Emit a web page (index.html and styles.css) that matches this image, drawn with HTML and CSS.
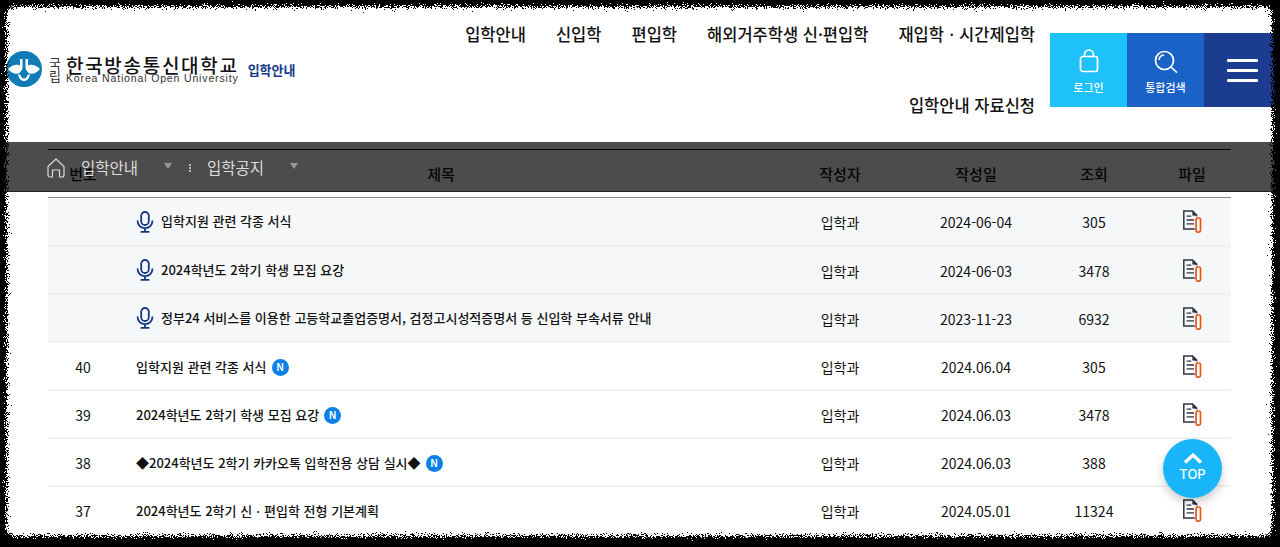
FILE: index.html
```html
<!DOCTYPE html>
<html lang="ko">
<head>
    <meta charset="UTF-8">
    <title>입학공지 - 한국방송통신대학교 입학안내</title>
    <link rel="stylesheet" href="styles.css">
</head>
<body>
    <svg width="0" height="0" class="defs">
        <defs>
            <symbol id="mic" viewBox="0 0 18 22">
                <rect x="5.2" y="1" width="7.6" height="13" rx="3.8" fill="none" stroke="currentColor" stroke-width="1.8"/>
                <path d="M1.5 9.500c0 4.600 3.300 7.600 7.500 7.600s7.500-3 7.500-7.600M9 17.100v3.600M4.600 20.900h8.800" fill="none" stroke="currentColor" stroke-width="1.8"/>
            </symbol>
            <symbol id="doc" viewBox="0 0 20 24">
                <path d="M14.600 6.500V5L10.600 1H1.800v18h11" fill="none" stroke="#2f3442" stroke-width="1.500"/>
                <path d="M10.800 1.600v3.600h3.400z" fill="#2f3442" stroke="#2f3442" stroke-width=".8"/>
                <path d="M4.600 6.200h4.600M4.600 10h7.400M4.600 13.800h7.400" fill="none" stroke="#2f3442" stroke-width="1.300"/>
                <rect x="14.100" y="8" width="4.400" height="14.200" rx="1.600" fill="#fff" stroke="#ee5316" stroke-width="1.700"/>
            </symbol>
        </defs>
    </svg>

    <header class="site-header">
        <a class="logo" href="#">
            <svg class="logo-mark" viewBox="0 0 36 36" width="36" height="36">
                <circle cx="18" cy="18" r="18" fill="#0f7cb8"/>
                <path d="M2 18c3-3 7-5 11-4l1 1V8h2.500v10l-3 4c-4 2-8 0-11.500-4zM34 18c-3-3-7-5-11-4l-1 1V8h-2.500v10l3 4c4 2 8 0 11.500-4z" fill="#fff"/>
                <path d="M12 23c1 5 3 7 6 7s5-2 6-7l-2.500 1c-.5 2-2 3.500-3.500 3.500s-3-1.500-3.500-3.500z" fill="#fff"/>
            </svg>
            <span class="logo-kuk">국<br>립</span>
            <span class="logo-name">
                <strong>한국방송통신대학교</strong>
                <small>Korea National Open University</small>
            </span>
            <span class="logo-sub">입학안내</span>
        </a>
        <nav class="gnb">
            <a href="#">입학안내</a>
            <a href="#">신입학</a>
            <a href="#">편입학</a>
            <a href="#">해외거주학생 신·편입학</a>
            <a href="#">재입학ㆍ시간제입학</a>
            <a href="#">입학안내 자료신청</a>
        </nav>
        <div class="util">
            <a class="util-btn login" href="#">
                <svg viewBox="0 0 20 24" width="20" height="24" fill="none" stroke="#fff" stroke-width="1.700">
                    <rect x="1.500" y="7.500" width="17" height="15" rx="2.500"/>
                    <path d="M5.500 7.500V5.500a4.500 4.500 0 0 1 9 0v2"/>
                </svg>
                로그인
            </a>
            <a class="util-btn search" href="#">
                <svg viewBox="0 0 24 24" width="24" height="24" fill="none" stroke="#fff" stroke-width="1.700">
                    <circle cx="10.500" cy="10.500" r="9"/>
                    <path d="M17 17l6 5.600M5 10a5.500 5.500 0 0 1 5-5"/>
                </svg>
                통합검색
            </a>
            <a class="util-btn menu" href="#"><i></i><i></i><i></i></a>
        </div>
    </header>

    <div class="breadcrumb">
        <svg class="home" viewBox="0 0 18 20" width="18" height="20" fill="none" stroke="#ddd" stroke-width="1.200">
            <path d="M1 8.500 9 1l8 7.500V17a2 2 0 0 1-2 2h-2.500v-7h-7v7H3a2 2 0 0 1-2-2z"/>
        </svg>
        <span class="crumb">입학안내</span>
        <span class="caret"></span>
        <span class="dots"></span>
        <span class="crumb second">입학공지</span>
        <span class="caret last"></span>
    </div>

    <main class="board">
        <table>
            <colgroup>
                <col class="c-num"><col class="c-title"><col class="c-writer"><col class="c-date"><col class="c-views"><col class="c-file">
            </colgroup>
            <thead>
                <tr><th>번호</th><th class="head-title">제목</th><th>작성자</th><th>작성일</th><th>조회</th><th class="file">파일</th></tr>
            </thead>
            <tbody>
                <tr class="notice">
                    <td></td>
                    <td class="title"><svg class="mic"><use href="#mic"/></svg>입학지원 관련 각종 서식</td>
                    <td>입학과</td><td>2024-06-04</td><td>305</td>
                    <td class="file"><svg class="doc"><use href="#doc"/></svg></td>
                </tr>
                <tr class="notice">
                    <td></td>
                    <td class="title"><svg class="mic"><use href="#mic"/></svg>2024학년도 2학기 학생 모집 요강</td>
                    <td>입학과</td><td>2024-06-03</td><td>3478</td>
                    <td class="file"><svg class="doc"><use href="#doc"/></svg></td>
                </tr>
                <tr class="notice">
                    <td></td>
                    <td class="title"><svg class="mic"><use href="#mic"/></svg>정부24 서비스를 이용한 고등학교졸업증명서, 검정고시성적증명서 등 신입학 부속서류 안내</td>
                    <td>입학과</td><td>2023-11-23</td><td>6932</td>
                    <td class="file"><svg class="doc"><use href="#doc"/></svg></td>
                </tr>
                <tr>
                    <td>40</td>
                    <td class="title">입학지원 관련 각종 서식<span class="new">N</span></td>
                    <td>입학과</td><td>2024.06.04</td><td>305</td>
                    <td class="file"><svg class="doc"><use href="#doc"/></svg></td>
                </tr>
                <tr>
                    <td>39</td>
                    <td class="title">2024학년도 2학기 학생 모집 요강<span class="new">N</span></td>
                    <td>입학과</td><td>2024.06.03</td><td>3478</td>
                    <td class="file"><svg class="doc"><use href="#doc"/></svg></td>
                </tr>
                <tr>
                    <td>38</td>
                    <td class="title">◆2024학년도 2학기 카카오톡 입학전용 상담 실시◆<span class="new">N</span></td>
                    <td>입학과</td><td>2024.06.03</td><td>388</td>
                    <td class="file"><svg class="doc"><use href="#doc"/></svg></td>
                </tr>
                <tr>
                    <td>37</td>
                    <td class="title">2024학년도 2학기 신ㆍ편입학 전형 기본계획</td>
                    <td>입학과</td><td>2024.05.01</td><td>11324</td>
                    <td class="file"><svg class="doc"><use href="#doc"/></svg></td>
                </tr>
            </tbody>
        </table>
    </main>

    <a class="top-btn" href="#">
        <svg viewBox="0 0 20 12" width="20" height="12" fill="none" stroke="#fff" stroke-width="3.400"><path d="M2 10.500 10 3l8 7.500"/></svg>
        TOP
    </a>

    <!-- torn black edge of the capture -->
    <svg class="edge" viewBox="0 0 1280 547" width="1280" height="547">
        <defs>
            <filter id="rough" x="-2%" y="-2%" width="104%" height="104%">
                <feTurbulence type="fractalNoise" baseFrequency="1.1" numOctaves="3" seed="4"/>
                <feDisplacementMap in="SourceGraphic" scale="15" xChannelSelector="R" yChannelSelector="G"/>
                <feGaussianBlur stdDeviation="0.3"/>
            </filter>
        </defs>
        <path filter="url(#rough)" fill-rule="evenodd" fill="#000" d="M-20-20H1300V567H-20zM14 7H1265a7 7 0 0 1 7 7V529a7 7 0 0 1-7 7H14a7 7 0 0 1-7-7V14a7 7 0 0 1 7-7z"/>
    </svg>
</body>
</html>
```

FILE: styles.css
```css
* {
    box-sizing: border-box;
}
html, body {
    margin: 0;
    height: 547px;
    overflow: hidden;
}
body {
    position: relative;
    font-family: "Noto Sans CJK KR", "Noto Sans", sans-serif;
    font-size: 14px;
    color: #111;
    background-color: #fff;
}
a {
    color: inherit;
    text-decoration: none;
}
.defs {
    position: absolute;
}

/* header */
.site-header {
    display: flex;
    height: 142px;
    padding-left: 6px;
}
.logo {
    display: flex;
    align-items: center;
    flex: none;
    height: 74px;
    margin-top: 32px;
}
.logo-mark {
    flex: none;
}
.logo-kuk {
    width: 14px;
    margin-left: 7px;
    font-size: 13px;
    line-height: 13px;
    color: #333;
}
.logo-name {
    display: flex;
    flex-direction: column;
    margin-left: 3px;
}
.logo-name strong {
    font-size: 19px;
    line-height: 18px;
    font-weight: 500;
    letter-spacing: 1.7px;
    color: #111;
}
.logo-name small {
    font-family: "Liberation Sans", sans-serif;
    font-size: 10.5px;
    line-height: 9px;
    letter-spacing: 0.85px;
    color: #333;
}
.logo-sub {
    margin-left: 9px;
    font-size: 13px;
    font-weight: 700;
    color: #14398c;
}
.gnb {
    display: flex;
    flex: 1;
    flex-wrap: wrap;
    justify-content: flex-end;
    align-content: flex-start;
    column-gap: 30px;
    padding-left: 100px;
    margin-top: -1px;
    font-size: 16.5px;
    font-weight: 500;
    line-height: 71px;
    color: #111;
}
.util {
    display: flex;
    flex: none;
    height: 74px;
    margin: 33px 0 0 15px;
}
.util-btn {
    display: flex;
    flex-direction: column;
    align-items: center;
    width: 77px;
    padding-top: 17px;
    font-size: 11px;
    font-weight: 500;
    line-height: 16px;
    color: #fff;
}
.util-btn svg {
    margin-bottom: 5px;
}
.login svg {
    margin-top: -1px;
    margin-bottom: 6px;
}
.login {
    background-color: #1fc1fb;
}
.search {
    background-color: #1a62c6;
}
.menu {
    gap: 7.500px;
    width: 76px;
    padding-top: 26px;
    background-color: #1c3d8f;
}
.menu i {
    width: 31px;
    height: 2.500px;
    border-radius: 1px;
    background-color: #fff;
}

/* breadcrumb lies over the table head */
.breadcrumb {
    position: absolute;
    top: 142px;
    left: 0;
    right: 0;
    z-index: 2;
    display: flex;
    align-items: flex-start;
    height: 50px;
    padding: 16px 0 0 47px;
    background-color: rgba(0, 0, 0, 0.7);
    border-bottom: 1px solid #222;
    color: #ddd;
}
.crumb {
    margin-top: -1px;
    margin-left: 16px;
    font-size: 15.500px;
    line-height: 20px;
}
.crumb.second {
    margin-left: 16px;
}
.caret {
    width: 0;
    height: 0;
    margin: 5px 0 0 26px;
    border-left: 4.500px solid transparent;
    border-right: 4.500px solid transparent;
    border-top: 6px solid #999;
}
.caret.last {
    margin-left: 26px;
}
.dots {
    width: 2px;
    height: 8px;
    margin: 6px 0 0 17px;
    background: repeating-linear-gradient(#bbb 0 2px, transparent 2px 3px);
}

/* board */
.board {
    padding: 7px 49px 0 48px;
}
table {
    width: 1183px;
    table-layout: fixed;
    border-collapse: collapse;
    border-top: 1px solid #000;
}
.c-num { width: 70px; }
.c-title { width: 662px; }
.c-writer { width: 120px; }
.c-date { width: 152px; }
.c-views { width: 84px; }
.c-file { width: 95px; }
th {
    height: 48px;
    padding: 0;
    font-size: 15px;
    font-weight: 500;
    text-align: center;
    color: #111;
    border-bottom: 1px solid #888;
}
th.head-title {
    padding-right: 16px;
}
th.file {
    padding-left: 17px;
}
td {
    height: 48px;
    padding: 2px 0 0;
    text-align: center;
    border-bottom: 2px solid #f1f1f1;
}
.notice td {
    background-color: #f6f7f9;
}
td.title {
    padding: 2px 0 0 18px;
    font-size: 13px;
    font-weight: 500;
    text-align: left;
    white-space: nowrap;
}
td.file {
    padding: 2px 0 0 17px;
}
.mic {
    width: 18px;
    height: 22px;
    margin: -1px 7px 0 0;
    vertical-align: middle;
    color: #15387f;
}
.doc {
    display: block;
    width: 20px;
    height: 24px;
    margin: 0 auto;
}
.new {
    display: inline-block;
    width: 17px;
    height: 17px;
    margin: -2px 0 0 5px;
    border-radius: 50%;
    background-color: #0d7fe8;
    font-family: "Liberation Sans", sans-serif;
    font-size: 10px;
    font-weight: 700;
    line-height: 17px;
    text-align: center;
    vertical-align: middle;
    color: #fff;
}

/* floating top button */
.top-btn {
    position: absolute;
    top: 439px;
    left: 1163px;
    z-index: 3;
    display: flex;
    flex-direction: column;
    align-items: center;
    width: 59px;
    height: 59px;
    padding-top: 13px;
    border-radius: 50%;
    background-color: #19b5fb;
    box-shadow: 0 5px 10px rgba(0, 0, 0, 0.2);
    font-family: Inter, sans-serif;
    font-size: 13px;
    font-weight: 500;
    line-height: 15px;
    color: #fff;
}
.top-btn svg {
    margin-bottom: 3px;
}
.edge {
    position: absolute;
    top: 0;
    left: 0;
    z-index: 5;
    pointer-events: none;
}
```
